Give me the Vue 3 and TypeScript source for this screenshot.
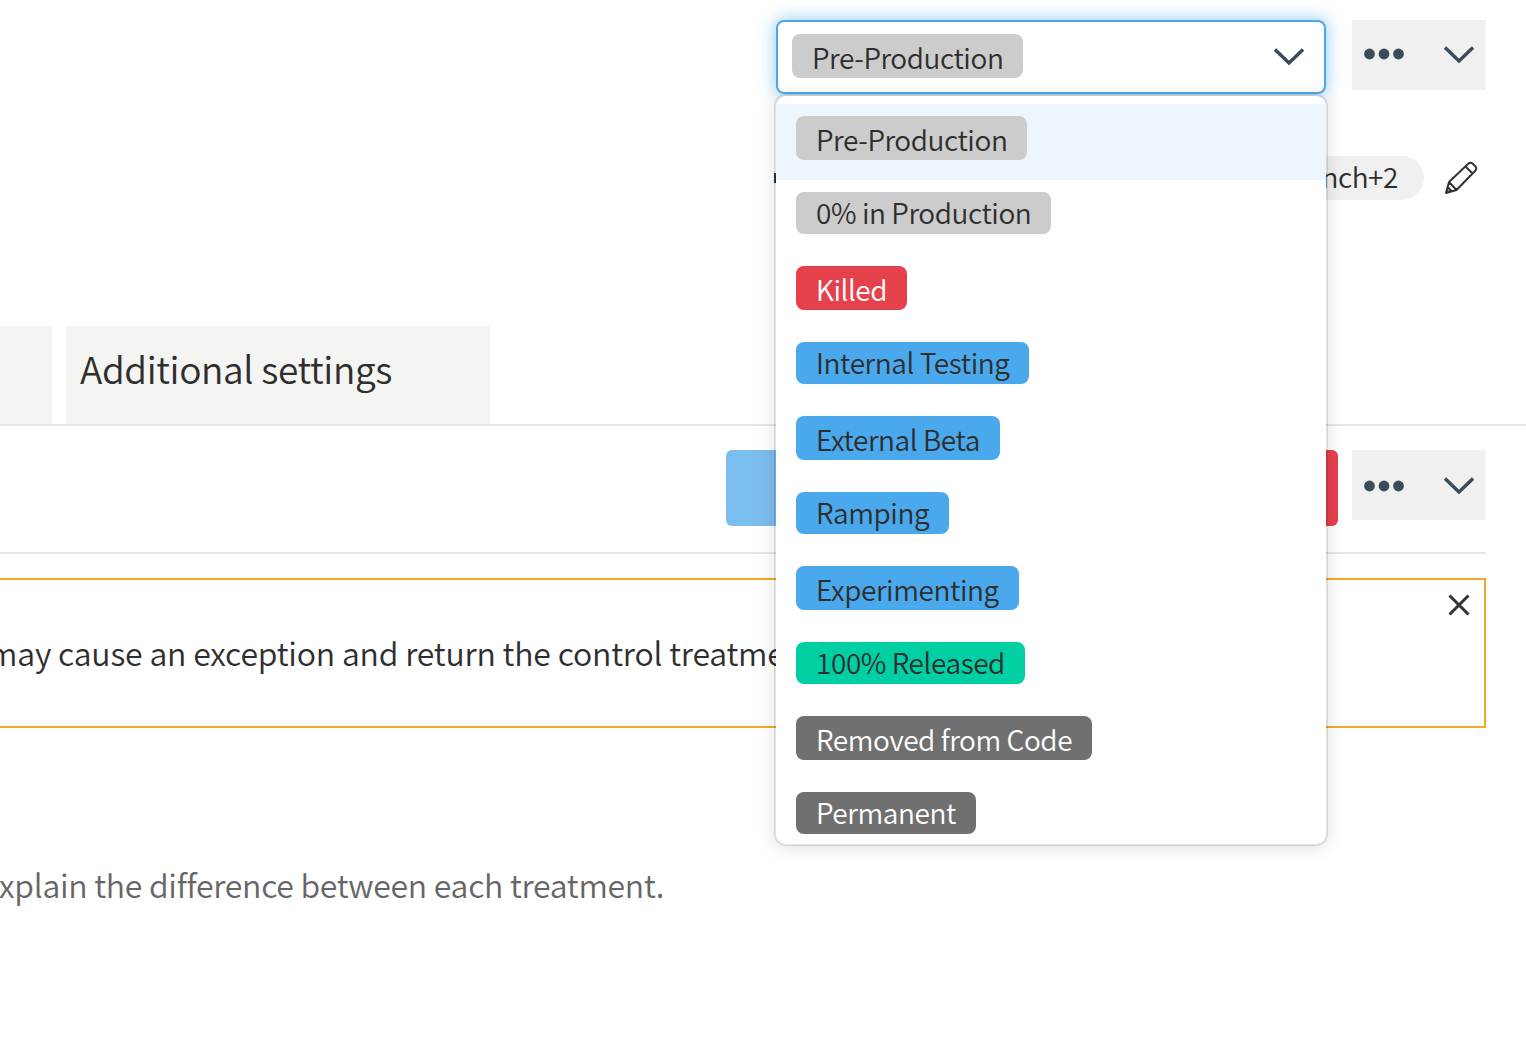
<script setup lang="ts">
interface Status {
  label: string
  tone: 'gray' | 'red' | 'blue' | 'green' | 'dark'
}

const statuses: Status[] = [
  { label: 'Pre-Production', tone: 'gray' },
  { label: '0% in Production', tone: 'gray' },
  { label: 'Killed', tone: 'red' },
  { label: 'Internal Testing', tone: 'blue' },
  { label: 'External Beta', tone: 'blue' },
  { label: 'Ramping', tone: 'blue' },
  { label: 'Experimenting', tone: 'blue' },
  { label: '100% Released', tone: 'green' },
  { label: 'Removed from Code', tone: 'dark' },
  { label: 'Permanent', tone: 'dark' },
]
</script>

<template>
  <div class="page">
    <div class="top-row">
      <div class="select-wrap">
        <div class="select-box">
          <span class="tag gray select-tag">Pre-Production</span>
          <svg class="chevron" width="30" height="17" viewBox="0 0 30 17">
            <polyline points="1,1.5 15,15 29,1.5" />
          </svg>
        </div>
        <ul class="menu">
          <li
            v-for="(s, i) in statuses"
            :key="s.label"
            class="menu-item"
            :class="{ active: i === 0 }"
          >
            <span class="tag" :class="[s.tone, i % 2 === 0 ? 'tall' : 'short']">{{ s.label }}</span>
          </li>
        </ul>
      </div>
      <div class="actions actions-top">
        <svg width="40" height="12" viewBox="0 0 40 12" class="dots">
          <circle cx="5.5" cy="6" r="5.4" />
          <circle cx="20" cy="6" r="5.4" />
          <circle cx="34.5" cy="6" r="5.4" />
        </svg>
        <svg class="chevron" width="30" height="17" viewBox="0 0 30 17">
          <polyline points="1,1.5 15,15 29,1.5" />
        </svg>
      </div>
    </div>

    <div class="chip-row">
      <span class="edge"></span>
      <span class="chip">branch+2</span>
      <svg class="pencil" width="34" height="34" viewBox="0 0 34 34">
        <path d="M2 32 L5 21 L24.5 2.5 Q26.5 1 28.5 2.5 L31.5 5.5 Q33 7.5 31.5 9.5 L12.5 29 Z M5 21 L12.5 29 M21.5 5.5 L28.5 12.5 M2.5 31 L3.5 26 L7 29.5 Z" />
      </svg>
    </div>

    <div class="tabs">
      <div class="tab tab-cut"></div>
      <div class="tab tab-main">Additional settings</div>
    </div>

    <div class="button-row">
      <div class="btn btn-blue"></div>
      <div class="btn btn-red"></div>
      <div class="actions actions-low">
        <svg width="40" height="12" viewBox="0 0 40 12" class="dots">
          <circle cx="5.5" cy="6" r="5.4" />
          <circle cx="20" cy="6" r="5.4" />
          <circle cx="34.5" cy="6" r="5.4" />
        </svg>
        <svg class="chevron" width="30" height="17" viewBox="0 0 30 17">
          <polyline points="1,1.5 15,15 29,1.5" />
        </svg>
      </div>
    </div>
    <div class="divider"></div>

    <div class="warning">
      <p class="warning-text">may cause an exception and return the control treatment</p>
      <svg class="close" width="22" height="22" viewBox="0 0 22 22">
        <path d="M1.5 1.5 L20.5 20.5 M20.5 1.5 L1.5 20.5" />
      </svg>
    </div>

    <p class="hint">explain the difference between each treatment.</p>
  </div>
</template>

<style scoped>
.page {
  width: 1526px;
  height: 1046px;
  overflow: hidden;
  position: relative;
  background: #fff;
  color: #2e2e2e;
  font-family: "Noto Sans CJK SC", "Noto Sans", sans-serif;
  font-weight: 350;
}
.top-row {
  display: flex;
  justify-content: flex-end;
  align-items: flex-start;
  gap: 26px;
  padding: 20px 40px 0 0;
}
.select-wrap {
  position: relative;
  width: 550px;
  height: 74px;
  z-index: 5;
}
.select-box {
  box-sizing: border-box;
  height: 74px;
  border: 2px solid #4aa8ed;
  border-radius: 8px;
  background: #fff;
  box-shadow: 0 0 16px 2px rgba(74, 168, 237, 0.5);
  display: flex;
  align-items: center;
  justify-content: space-between;
  padding: 0 20px 2px 14px;
}
.tag {
  display: inline-block;
  box-sizing: border-box;
  height: 44px;
  line-height: 46px;
  padding: 0 20px;
  border-radius: 8px;
  font-size: 28px;
  letter-spacing: -0.43px;
  white-space: nowrap;
}
.tag.short {
  height: 42px;
  line-height: 40px;
}
.select-tag {
  padding: 0 19.5px 0 20px;
}
.gray { background: #ccc; color: #2e2e2e; }
.red { background: #e5414d; color: #fff; }
.blue { background: #4aa8ed; color: #2e2e2e; }
.green { background: #00cea3; color: #2e2e2e; }
.dark { background: #707070; color: #fff; }
.chevron polyline {
  fill: none;
  stroke: #3a4b5c;
  stroke-width: 3.4;
}
.menu {
  position: absolute;
  top: 74px;
  left: -2px;
  width: 554px;
  height: 752px;
  box-sizing: border-box;
  margin: 0;
  padding: 8px 0 0;
  list-style: none;
  overflow: hidden;
  background: #fff;
  background-clip: padding-box;
  border: 2px solid rgba(0, 0, 0, 0.11);
  border-radius: 12px;
  box-shadow: 0 2px 18px rgba(0, 0, 0, 0.12);
}
.menu-item {
  padding: 12px 20px 20px;
  display: flex;
}
.menu-item.active {
  background: #edf5fd;
}
.actions {
  width: 134px;
  height: 70px;
  background: #f0f0f0;
  display: flex;
  align-items: center;
  justify-content: space-between;
  padding: 0 12px;
  box-sizing: border-box;
  flex: none;
}
.actions-top {
  padding-bottom: 2px;
}
.actions-low .dots {
  margin-top: 2px;
}
.dots {
  fill: #3a4b5c;
}
.chip-row {
  display: flex;
  justify-content: flex-end;
  align-items: center;
  margin-top: 62px;
  padding-right: 48px;
  height: 44px;
}
.edge {
  width: 2px;
  height: 10px;
  margin-right: 4px;
  background: #333;
}
.chip {
  box-sizing: border-box;
  width: 644px;
  height: 44px;
  line-height: 40px;
  padding: 0 26px;
  border-radius: 22px;
  background: #f0f0f0;
  font-size: 28px;
  letter-spacing: -0.43px;
  text-align: right;
  margin-right: 20px;
}
.pencil path {
  fill: none;
  stroke: #333;
  stroke-width: 2;
  stroke-linejoin: round;
}
.tabs {
  display: flex;
  gap: 14px;
  margin-top: 126px;
  height: 98px;
  border-bottom: 2px solid #e6e6e6;
}
.tab {
  background: #f4f4f2;
  height: 98px;
}
.tab-cut {
  width: 52px;
}
.tab-main {
  width: 424px;
  padding-left: 14px;
  box-sizing: border-box;
  font-size: 37px;
  letter-spacing: -0.37px;
  line-height: 85px;
}
.button-row {
  display: flex;
  justify-content: flex-end;
  align-items: flex-start;
  margin-top: 24px;
  padding-right: 40px;
  height: 76px;
}
.btn {
  height: 76px;
}
.btn-blue {
  width: 300px;
  background: #7cbdf0;
  border-radius: 6px 0 0 6px;
}
.btn-red {
  width: 312px;
  margin-right: 14px;
  background: #e5414d;
  border-radius: 0 6px 6px 0;
}
.divider {
  margin: 26px 40px 0 0;
  height: 2px;
  background: #e6e6e6;
}
.warning {
  position: relative;
  box-sizing: border-box;
  margin: 24px 40px 0 -20px;
  height: 150px;
  border: 2px solid #f7a82b;
  padding-left: 6px;
}
.warning-text {
  margin: 0;
  font-size: 32px;
  letter-spacing: -0.19px;
  line-height: 144px;
  white-space: nowrap;
}
.close {
  position: absolute;
  top: 14px;
  right: 14px;
}
.close path {
  fill: none;
  stroke: #333;
  stroke-width: 3;
}
.hint {
  margin: 126px 0 0 -18px;
  font-size: 32px;
  letter-spacing: -0.28px;
  line-height: 60px;
  color: #666;
  white-space: nowrap;
}
</style>
